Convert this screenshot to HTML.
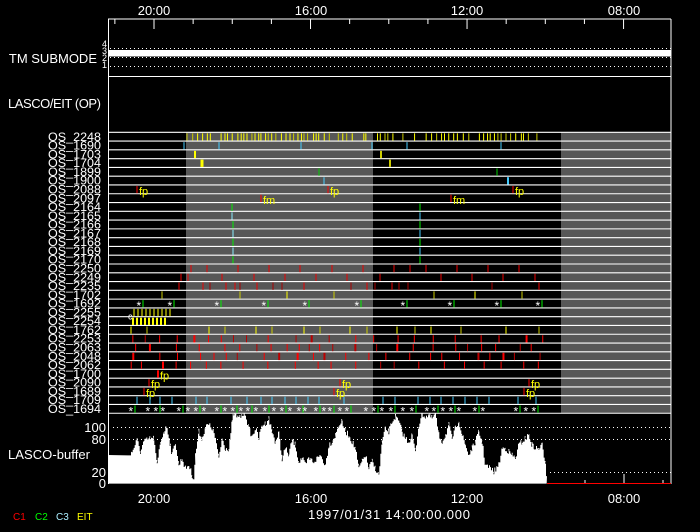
<!DOCTYPE html>
<html><head><meta charset="utf-8"><style>
html,body{margin:0;padding:0;background:#000;width:700px;height:532px;overflow:hidden}
svg{display:block}
text{font-family:"Liberation Sans",sans-serif;fill:#fff}
</style></head><body>
<svg id="s" width="700" height="532" viewBox="0 0 700 532" xmlns="http://www.w3.org/2000/svg">
<rect width="700" height="532" fill="#000"/>
<rect x="186" y="132" width="187" height="281" fill="#575757"/>
<rect x="561" y="132" width="110" height="281" fill="#575757"/>
<g id="rows"></g>
<g id="marks"></g>
<g transform="translate(100,405) scale(0.33333)"><polygon id="buf" fill="#fff" points=""/></g>
<g id="dots"></g>
<line x1="108" y1="19" x2="671" y2="19" stroke="#fff"/>
<line x1="108.5" y1="19" x2="108.5" y2="484" stroke="#fff"/>
<line x1="671" y1="19" x2="671" y2="484" stroke="#fff"/>
<line x1="108" y1="76.5" x2="671" y2="76.5" stroke="#fff"/>
<rect x="108" y="50" width="563" height="6.5" fill="#fff"/>
<line x1="547" y1="483.5" x2="671" y2="483.5" stroke="#f00"/>
<g id="ticks"></g>
<g font-size="13">
<text x="154" y="15" text-anchor="middle">20:00</text>
<text x="311" y="15" text-anchor="middle">16:00</text>
<text x="467" y="15" text-anchor="middle">12:00</text>
<text x="624" y="15" text-anchor="middle">08:00</text>
<text x="154" y="503" text-anchor="middle">20:00</text>
<text x="311" y="503" text-anchor="middle">16:00</text>
<text x="467" y="503" text-anchor="middle">12:00</text>
<text x="624" y="503" text-anchor="middle">08:00</text>
<text x="389" y="519" text-anchor="middle" textLength="162">1997/01/31 14:00:00.000</text>
<text x="97" y="63" text-anchor="end">TM SUBMODE</text>
<text x="8" y="108" textLength="93">LASCO/EIT (OP)</text>
<text x="8" y="459" textLength="82">LASCO-buffer</text>
<text x="106" y="432" text-anchor="end">100</text>
<text x="106" y="444" text-anchor="end">80</text>
<text x="106" y="477" text-anchor="end">20</text>
<text x="106" y="488" text-anchor="end">0</text>
</g>
<g font-size="9">
<text x="107" y="47" text-anchor="end">4</text>
<text x="107" y="54" text-anchor="end">3</text>
<text x="107" y="61" text-anchor="end">2</text>
<text x="107" y="68" text-anchor="end">1</text>
</g>
<g font-size="10">
<text x="13" y="520" style="fill:#f00">C1</text>
<text x="35" y="520" style="fill:#0f0">C2</text>
<text x="56" y="520" style="fill:#aef">C3</text>
<text x="77" y="520" style="fill:#ff0">EIT</text>
</g>
<g id="oslab" font-size="12"></g>
</svg>
<script>
var NS="http://www.w3.org/2000/svg";
function el(p,t,a,txt){var e=document.createElementNS(NS,t);for(var k in a)e.setAttribute(k,a[k]);if(txt!=null)e.textContent=txt;document.getElementById(p).appendChild(e);return e;}
var seed=7;function rnd(){seed=(seed*16807)%2147483647;return seed/2147483647;}
var Y0=132.3,H=8.78;
function ry(i){return Y0+i*H;}
for(var i=0;i<=32;i++)el("rows","line",{x1:108,x2:671,y1:ry(i),y2:ry(i),stroke:"#fff","stroke-width":1.1});
var names=["2248","1690","1703","1704","1899","1900","2088","2097","2164","2165","2166","2167","2168","2169","2170","2250","2249","2235","1702","1692","2255","2254","1762","2253","2063","2048","2062","1700","2090","1689","1709","1694"];
for(var i=0;i<32;i++)el("oslab","text",{x:101,y:ry(i)+8.5,"text-anchor":"end",textLength:53,lengthAdjust:"spacingAndGlyphs"},"OS_"+names[i]);
function tick(row,x,c,w,frac){var y1=ry(row)+1,y2=ry(row+1)-0.5;if(frac)y2=y1+(y2-y1)*frac;el("marks","line",{x1:x,x2:x,y1:y1,y2:y2,stroke:c,"stroke-width":w||1});}
var x=187;while(x<538){tick(0,x,rnd()<0.3?"#cc0":"#ff0");x+=2+rnd()*4;if(rnd()<0.15)x+=6;}
[184,219,301,372,407,501].forEach(function(v){tick(1,v,"#4cf")});
tick(2,195,"#ff0",2);tick(2,381,"#cc0",2);
tick(3,202,"#ff0",3);tick(3,390,"#cc0",2);
tick(4,319,"#0c0");tick(4,497,"#0c0");
tick(5,324,"#4cf");tick(5,508,"#4cf",2);
function fp(row,x,t){tick(row,x-2,"#f00");el("marks","text",{x:x,y:ry(row)+10,"font-size":"11",style:"fill:#ff0"},t);}
fp(6,139,"fp");fp(6,330,"fp");fp(6,515,"fp");fp(7,263,"fm");fp(7,453,"fm");
for(var r=8;r<=14;r++){tick(r,r<10?232:233,r%2?"#8ef":"#0e0");tick(r,420,r%2?"#4cf":"#0e0");}
[191,207,238,269,300,332,363,394,410,426,457,488,519].forEach(function(v){tick(15,v,"#e00")});
[181,188,222,254,285,316,347,380,441,472,503,535].forEach(function(v){tick(16,v,"#e00")});
[179,203,210,226,235,240,257,273,282,304,351,367,375,392,399,408,492,539].forEach(function(v){tick(17,v,v%3?"#e00":"#a00")});
[162,240,287,334,434,475,522].forEach(function(v){tick(18,v,v%2?"#ff0":"#cc0")});
function star(row,x){el("marks","text",{x:x-3.5,y:ry(row)+11,"font-size":"12"},"*");}
[140,171,218,265,306,358,404,451,498,539].forEach(function(v){star(19,v);tick(19,v+3,"#0e0");});
el("marks","text",{x:128,y:ry(21)+3,"font-size":"9"},"c");
for(var v=134;v<=170;v+=4)tick(20,v,"#ff0",1);
for(var v=133;v<=168;v+=4)tick(21,v,"#ff0",2);
[131,147,209,225,256,272,304,320,350,367,397,415,431,461,506,539].forEach(function(v,i){tick(22,v,i%2?"#cc0":"#ff0")});
for(var r=23;r<=26;r++){var x=128+rnd()*8;while(x<555){tick(r,x,rnd()<0.3?"#b00":"#f00",rnd()<0.15?2:1);x+=10+rnd()*18;}}
tick(27,158,"#f00",2);
fp(28,151,"fp");fp(28,342,"fp");fp(28,531,"fp");
fp(29,146,"fp");fp(29,336,"fp");fp(29,526,"fp");
fp(27,160,"fp");
[137,150,160,172,196,207,231,247,261,272,285,296,308,319,344,383,395,418,430,441,453,465,477,489,518,536].forEach(function(v){tick(30,v,"#4cf")});
[132,149,157,164,180,189,197,205,218,226,234,242,249,257,266,275,283,291,300,306,317,325,331,341,348,367,375,383,392,404,413,428,435,444,452,460,476,484,517,527,535].forEach(function(v,i){star(31,v);if(i%2==0)tick(31,v+3,"#0e0");});
for(var h=0;h<15;h++){var tx=154-2*39.13+h*39.13;if(tx<108||tx>671)continue;var major=(h%4==2);el("ticks","line",{x1:tx,x2:tx,y1:19,y2:major?29:24,stroke:"#fff"});}
[585,624,663].forEach(function(v){el("ticks","line",{x1:v,x2:v,y1:v==624?474:480,y2:483,stroke:"#fff"});});
function dots(y,x0,x1){for(var x=x0;x<x1;x+=4)el("dots","rect",{x:x,y:y,width:1,height:1,fill:"#fff"});}
dots(48,110,671);dots(57,110,671);dots(66,110,671);
dots(427,113,671);dots(439,113,671);dots(472,550,671);
var P=[[24,150],[90,150],[95,140],[110,105],[120,140],[130,110],[150,100],[160,100],[170,180],[180,110],[190,80],[200,65],[210,120],[215,150],[225,110],[235,180],[245,160],[255,190],[265,180],[275,210],[280,220],[285,150],[295,80],[305,100],[315,65],[325,60],[335,70],[345,100],[355,160],[365,100],[375,130],[385,130],[395,50],[400,25],[415,40],[425,30],[435,25],[445,70],[455,95],[465,70],[475,100],[485,60],[495,55],[505,40],[515,80],[525,110],[535,85],[545,160],[555,130],[565,150],[575,105],[585,120],[595,170],[605,160],[615,180],[625,160],[640,170],[660,150],[675,180],[685,120],[695,110],[705,90],[715,60],[725,50],[735,80],[745,90],[755,110],[765,130],[775,190],[785,170],[795,150],[805,190],[815,170],[825,190],[835,210],[845,110],[855,70],[865,80],[875,50],[885,35],[895,50],[905,80],[915,100],[925,110],[935,90],[945,140],[955,60],[965,25],[975,35],[985,30],[995,40],[1005,25],[1015,90],[1025,110],[1035,90],[1045,60],[1055,100],[1065,70],[1075,45],[1085,90],[1095,120],[1105,150],[1115,130],[1125,110],[1135,80],[1145,110],[1155,180],[1170,190],[1180,200],[1195,180],[1205,130],[1215,130],[1225,140],[1235,150],[1245,160],[1255,120],[1265,110],[1275,100],[1285,90],[1295,120],[1305,130],[1315,130],[1325,120],[1335,170],[1340,230],[1345,236]];
var pts=["24,236"];
for(var i=0;i<P.length-1;i++){var a=P[i],b=P[i+1];if(a[0]<90){pts.push(a[0]+","+a[1]);continue;}
for(var xx=a[0];xx<b[0];xx+=3){var t=(xx-a[0])/(b[0]-a[0]);var yy=a[1]+(b[1]-a[1])*t+(rnd()-0.5)*18;yy=Math.max(25,Math.min(236,yy));pts.push(xx+","+yy);pts.push((xx+3)+","+yy);}}
pts.push("1345,236");
document.getElementById("buf").setAttribute("points",pts.join(" "));
</script>
</body></html>
